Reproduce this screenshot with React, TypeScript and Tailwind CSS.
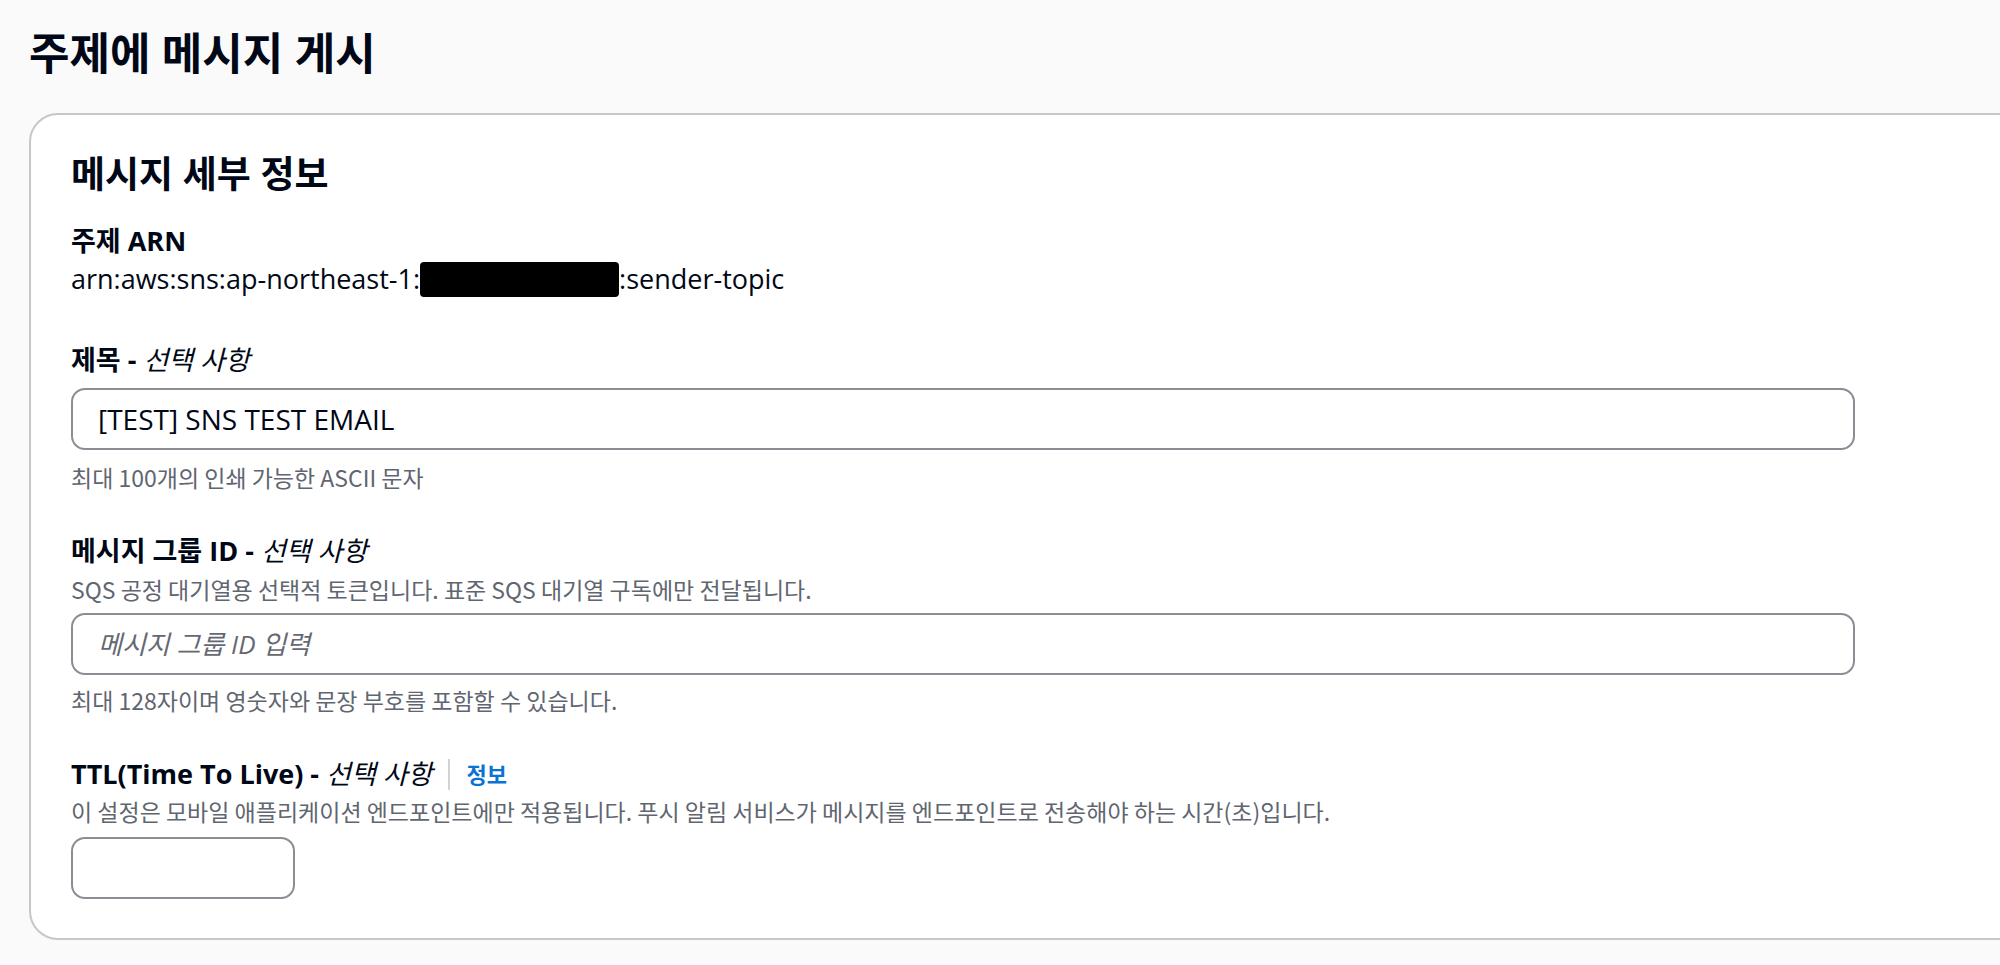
import React from 'react';

const font = "font-['Open_Sans','Noto_Sans_CJK_KR',sans-serif]";

function Label({ children, info }: { children: React.ReactNode; info?: boolean }) {
    return (
        <div className="flex items-center text-[27px] leading-[36px] text-[#000716]">
            <span>{children}</span>
            {info && (
                <>
                    <span className="mx-[16px] h-[31px] w-[2px] bg-[#d1d1d6]" />
                    <span className="text-[22px] font-bold text-[#0972d3]">정보</span>
                </>
            )}
        </div>
    );
}

function Optional({ title }: { title: string }) {
    return (
        <>
            <span className="font-bold">{title} - </span>
            <i className="font-normal">선택 사항</i>
        </>
    );
}

// hints use the CJK face for latin too, its narrower digits fit the reference widths
function Hint({ children, className = '' }: { children: React.ReactNode; className?: string }) {
    return (
        <p className={`font-['Noto_Sans_CJK_KR',sans-serif] text-[23px] leading-[30px] text-[#5f6670] ${className}`}>
            {children}
        </p>
    );
}

const inputClass =
    'block h-[62px] rounded-[14px] border-2 border-[#8c8c94] bg-white px-[25px] text-[#000716] outline-none';

export default function App() {
    return (
        <div className={`${font} min-h-[965px] overflow-hidden bg-[#fafafa] pl-[29px] pt-[25px]`}>
            <h1 className="text-[44px] font-bold leading-[56px] text-[#000716]">주제에 메시지 게시</h1>

            <div className="mt-[32px] mr-[-60px] rounded-[29px] border-2 border-[#c6c6cd] bg-white pl-[40px] pt-[35px] pb-[39px]">
                <h2 className="text-[37px] font-bold leading-[48px] text-[#000716]">메시지 세부 정보</h2>

                <div className="mt-[25px]">
                    <Label>
                        <span className="font-bold">주제 ARN</span>
                    </Label>
                    <div className="mt-[2px] flex items-center text-[27px] leading-[36px] text-[#000716]">
                        <span>arn:aws:sns:ap-northeast-1:</span>
                        <span className="inline-block h-[35px] w-[199px] rounded-[4px] bg-black" />
                        <span>:sender-topic</span>
                    </div>
                </div>

                <div className="mt-[45px]">
                    <Label>
                        <Optional title="제목" />
                    </Label>
                    <input
                        defaultValue="[TEST] SNS TEST EMAIL"
                        className={`${inputClass} mt-[10px] w-[1784px] text-[28px]`}
                    />
                    <Hint className="mt-[12px]">최대 100개의 인쇄 가능한 ASCII 문자</Hint>
                </div>

                <div className="mt-[41px]">
                    <Label>
                        <Optional title="메시지 그룹 ID" />
                    </Label>
                    <Hint className="mt-[5px]">SQS 공정 대기열용 선택적 토큰입니다. 표준 SQS 대기열 구독에만 전달됩니다.</Hint>
                    <input
                        placeholder="메시지 그룹 ID 입력"
                        className={`${inputClass} mt-[9px] w-[1784px] text-[26px] placeholder:italic placeholder:text-[#656871]`}
                    />
                    <Hint className="mt-[10px]">최대 128자이며 영숫자와 문장 부호를 포함할 수 있습니다.</Hint>
                </div>

                <div className="mt-[41px]">
                    <Label info>
                        <Optional title="TTL(Time To Live)" />
                    </Label>
                    <Hint className="mt-[4px]">
                        이 설정은 모바일 애플리케이션 엔드포인트에만 적용됩니다. 푸시 알림 서비스가 메시지를 엔드포인트로 전송해야 하는 시간(초)입니다.
                    </Hint>
                    <input className={`${inputClass} mt-[11px] w-[224px] text-[28px]`} />
                </div>
            </div>
        </div>
    );
}
